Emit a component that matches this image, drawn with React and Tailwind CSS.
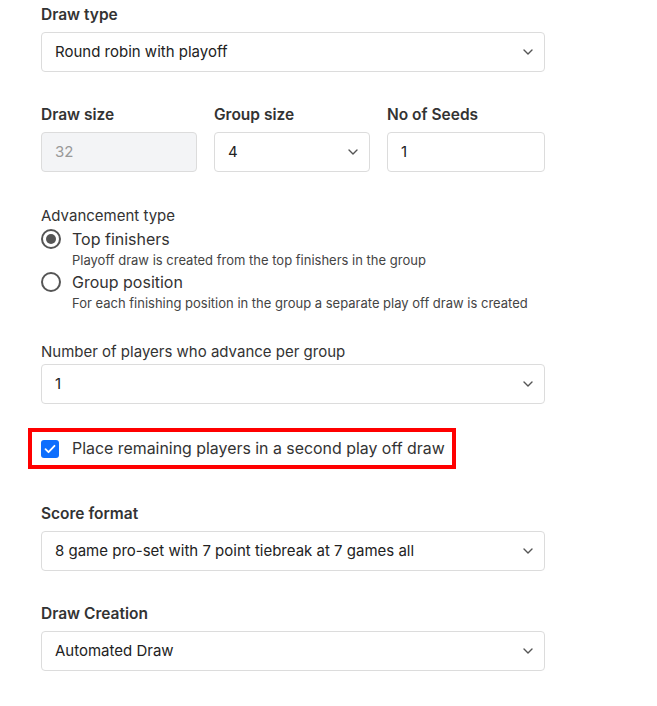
import { useState } from 'react';

const Chevron = () => (
  <svg width="10" height="6" viewBox="0 0 10 6" className="shrink-0">
    <path d="M1 1l4 4 4-4" fill="none" stroke="#555" strokeWidth="1.4" strokeLinecap="round" strokeLinejoin="round" />
  </svg>
);

function SelectBox({ value }) {
  return (
    <div className="h-10 flex items-center justify-between pl-[13px] pr-[11px] border border-[#dcdcdc] rounded-[4px] bg-white text-[15px] text-[#222]">
      <span>{value}</span>
      <Chevron />
    </div>
  );
}

function Radio({ checked, title, desc }) {
  return (
    <div>
      <div className="flex items-center gap-[11px] h-[22px]">
        <span className="w-5 h-5 rounded-full border-2 border-[#555] flex items-center justify-center">
          {checked && <span className="w-[10px] h-[10px] rounded-full bg-[#555]" />}
        </span>
        <span className="text-[16px] text-[#333]">{title}</span>
      </div>
      <div className="pl-[31px] text-[13px] text-[#444] leading-[20px]">{desc}</div>
    </div>
  );
}

export default function App() {
  const [checked] = useState(true);

  return (
    <div className="min-h-screen bg-white" style={{ fontFamily: 'Inter, "Noto Sans", sans-serif' }}>
      <div className="w-[504px] ml-[41px] pt-[3px] flex flex-col">
        {/* Draw type */}
        <div className="text-[15.5px] font-semibold text-[#333] leading-6 mb-[5px]">Draw type</div>
        <SelectBox value="Round robin with playoff" />

        {/* sizes row */}
        <div className="grid grid-cols-[156px_156px_158px] gap-[17px] mt-[31px]">
          <div>
            <div className="text-[15.5px] font-semibold text-[#333] leading-6 mb-[5px]">Draw size</div>
            <div className="h-10 flex items-center pl-[13px] border border-[#dcdcdc] rounded-[4px] bg-[#f3f4f6] text-[15px] text-[#999]">32</div>
          </div>
          <div>
            <div className="text-[15.5px] font-semibold text-[#333] leading-6 mb-[5px]">Group size</div>
            <SelectBox value="4" />
          </div>
          <div>
            <div className="text-[15.5px] font-semibold text-[#333] leading-6 mb-[5px]">No of Seeds</div>
            <div className="h-10 flex items-center pl-[13px] border border-[#dcdcdc] rounded-[4px] bg-white text-[15px] text-[#222]">1</div>
          </div>
        </div>

        {/* Advancement type */}
        <div className="mt-8 text-[15px] text-[#333] leading-6">Advancement type</div>
        <div className="flex flex-col gap-[1px]">
          <Radio checked title="Top finishers" desc="Playoff draw is created from the top finishers in the group" />
          <Radio title="Group position" desc="For each finishing position in the group a separate play off draw is created" />
        </div>

        {/* Number advance */}
        <div className="mt-[27px] text-[15px] text-[#333] leading-6">Number of players who advance per group</div>
        <SelectBox value="1" />

        {/* highlighted checkbox */}
        <div className="mt-[24px] -ml-[13px] w-[428px] h-[41px] border-[4px] border-[#ff0000] flex items-center pl-[9px] gap-[13px]">
          <span className={`w-[18px] h-[18px] rounded-[3px] flex items-center justify-center ${checked ? 'bg-[#0d6efd]' : 'border border-gray-400'}`}>
            <svg width="12" height="10" viewBox="0 0 12 10">
              <path d="M1.5 5.2l3 3L10.5 1.8" fill="none" stroke="#fff" strokeWidth="1.8" strokeLinecap="round" strokeLinejoin="round" />
            </svg>
          </span>
          <span className="text-[15.9px] text-[#333]">Place remaining players in a second play off draw</span>
        </div>

        {/* Score format */}
        <div className="mt-[33px] text-[15.5px] font-semibold text-[#333] leading-6 mb-[5px]">Score format</div>
        <SelectBox value="8 game pro-set with 7 point tiebreak at 7 games all" />

        {/* Draw creation */}
        <div className="mt-[31px] text-[15.5px] font-semibold text-[#333] leading-6 mb-[5px]">Draw Creation</div>
        <SelectBox value="Automated Draw" />
      </div>
    </div>
  );
}
